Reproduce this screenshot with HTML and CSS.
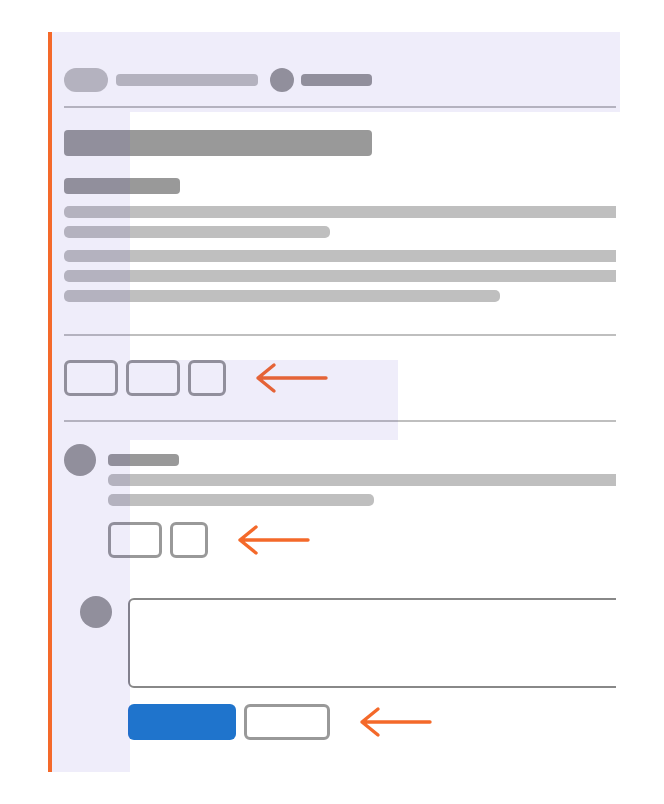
FILE: index.html
```html
<!DOCTYPE html>
<html lang="en">
<head>
<meta charset="utf-8">
<title>Comment wireframe</title>
<link rel="stylesheet" href="styles.css">
</head>
<body>
<div class="canvas">
  <div class="panel">
    <div class="header">
      <span class="pill"></span>
      <span class="bar bar-crumb"></span>
      <span class="dot"></span>
      <span class="bar bar-user"></span>
    </div>
    <div class="rule rule-head"></div>

    <div class="block title"></div>
    <div class="block subtitle"></div>

    <div class="para para-first">
      <div class="line line-full"></div>
      <div class="line line-w266"></div>
    </div>
    <div class="para">
      <div class="line line-full"></div>
      <div class="line line-full"></div>
      <div class="line line-w436"></div>
    </div>

    <div class="rule rule-sec"></div>

    <div class="actions actions-main">
      <span class="btn btn-wide"></span>
      <span class="btn btn-wide"></span>
      <span class="btn btn-narrow"></span>
      <svg class="arrow" width="74" height="32" viewBox="0 0 74 32"><path d="M19 3 L3 16 L19 29 M3 16 L71 16"/></svg>
    </div>

    <div class="rule rule-sec2"></div>

    <div class="comment">
      <span class="avatar"></span>
      <div class="comment-body">
        <div class="block name"></div>
        <div class="line line-full"></div>
        <div class="line line-w266"></div>
        <div class="actions actions-comment">
          <span class="btn btn-wide"></span>
          <span class="btn btn-narrow"></span>
          <svg class="arrow" width="74" height="32" viewBox="0 0 74 32"><path d="M19 3 L3 16 L19 29 M3 16 L71 16"/></svg>
        </div>
      </div>
    </div>

    <div class="reply">
      <span class="avatar"></span>
      <div class="reply-body">
        <div class="textarea"></div>
        <div class="actions actions-reply">
          <span class="btn-primary"></span>
          <span class="btn btn-cancel"></span>
          <svg class="arrow" width="74" height="32" viewBox="0 0 74 32"><path d="M19 3 L3 16 L19 29 M3 16 L71 16"/></svg>
        </div>
      </div>
    </div>
  </div>

  <div class="overlay ov-header"></div>
  <div class="overlay ov-left"></div>
  <div class="overlay ov-mid"></div>
</div>
</body>
</html>
```

FILE: styles.css
```css
html, body {
  margin: 0;
  padding: 0;
  background: #ffffff;
  font-family: "Liberation Sans", Arial, sans-serif;
}

.canvas {
  position: relative;
  margin: 32px 0 0 48px;
  width: 568px;
}

.panel {
  border-left: 4px solid #f4692a;
  padding: 36px 0 32px 12px;
  width: 552px;
  overflow: hidden;
}

/* header */
.header {
  display: flex;
  align-items: center;
  height: 24px;
}
.pill {
  width: 44px;
  height: 24px;
  border-radius: 12px;
  background: #bfbfbf;
}
.bar {
  height: 12px;
  border-radius: 4px;
}
.bar-crumb {
  width: 142px;
  margin-left: 8px;
  background: #bfbfbf;
}
.dot {
  width: 24px;
  height: 24px;
  border-radius: 50%;
  background: #999999;
  margin-left: 12px;
}
.bar-user {
  width: 71px;
  margin-left: 7px;
  background: #999999;
}

.rule {
  height: 2px;
  background: #bfbfbf;
}
.rule-head { margin-top: 14px; }
.rule-sec { margin-top: 32px; }
.rule-sec2 { margin-top: 24px; }

.block {
  background: #999999;
  border-radius: 4px;
}
.title {
  margin-top: 22px;
  width: 308px;
  height: 26px;
}
.subtitle {
  margin-top: 22px;
  width: 116px;
  height: 16px;
}

.para {
  display: flex;
  flex-direction: column;
  gap: 8px;
  margin-top: 12px;
}
.line {
  height: 12px;
  border-radius: 5px;
  background: #bfbfbf;
}
.line-full { width: calc(100% + 16px); }
.line-w266 { width: 266px; }
.line-w436 { width: 436px; }

/* action rows */
.actions {
  display: flex;
  align-items: center;
  gap: 8px;
}
.actions-main { margin-top: 24px; }
.btn {
  box-sizing: border-box;
  height: 36px;
  border: 3px solid #999999;
  border-radius: 6px;
  background: transparent;
}
.btn-wide { width: 54px; }
.btn-narrow { width: 38px; }
.btn-cancel { width: 86px; }
.btn-primary {
  width: 108px;
  height: 36px;
  border-radius: 6px;
  background: #1f74cc;
}
.arrow {
  margin-left: 21px;
  flex: none;
}
.arrow path {
  fill: none;
  stroke: #f4692a;
  stroke-width: 3.4;
  stroke-linecap: round;
  stroke-linejoin: round;
}

/* comment */
.comment {
  display: flex;
  gap: 12px;
  margin-top: 22px;
}
.avatar {
  flex: none;
  width: 32px;
  height: 32px;
  border-radius: 50%;
  background: #999999;
}
.comment-body {
  flex: 1;
  display: flex;
  flex-direction: column;
  gap: 8px;
  padding-top: 10px;
}
.name {
  width: 71px;
  height: 12px;
}
.actions-comment { margin-top: 8px; }

/* reply */
.reply {
  display: flex;
  gap: 16px;
  margin-top: 38px;
  padding-left: 16px;
}
.reply-body {
  flex: 1;
  padding-top: 2px;
}
.textarea {
  box-sizing: border-box;
  width: calc(100% + 24px);
  height: 90px;
  border: 2px solid #888888;
  border-radius: 6px;
}
.actions-reply { margin-top: 16px; }

/* annotation highlights */
.overlay {
  position: absolute;
  background: rgba(70, 45, 200, 0.085);
  pointer-events: none;
}
.ov-header {
  left: 4px;
  top: 0;
  width: 568px;
  height: 80px;
}
.ov-left {
  left: 4px;
  top: 80px;
  width: 78px;
  height: 660px;
}
.ov-mid {
  left: 82px;
  top: 328px;
  width: 268px;
  height: 80px;
}
```
